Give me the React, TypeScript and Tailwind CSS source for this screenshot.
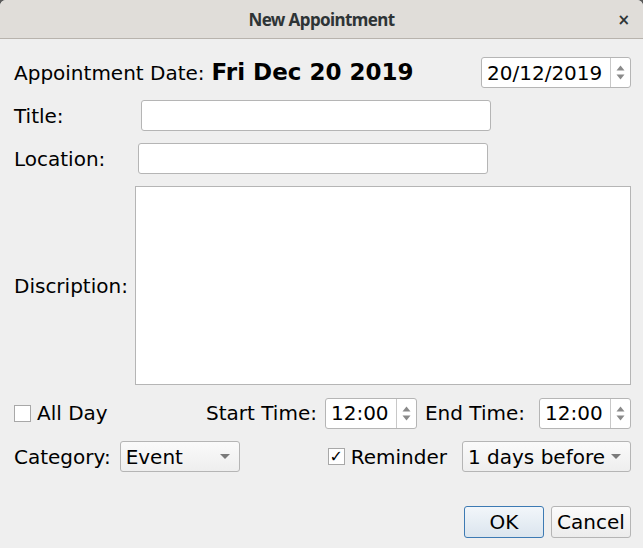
import React from 'react'

function SpinArrows() {
  return (
    <div className="flex h-full w-[20px] flex-col items-center justify-center gap-[3px] border-l border-[#c8c8c8]">
      <svg width="9" height="6" viewBox="0 0 9 6"><path d="M0.5 5.5 L4.5 0.5 L8.5 5.5 Z" fill="#8a8a8a" /></svg>
      <svg width="9" height="6" viewBox="0 0 9 6"><path d="M0.5 0.5 L4.5 5.5 L8.5 0.5 Z" fill="#8a8a8a" /></svg>
    </div>
  )
}

function Spinner({ value, width }: { value: string; width: string }) {
  return (
    <div className={`flex h-[31px] ${width} items-center rounded-[3px] border border-[#b5b5b5] bg-white`}>
      <span className="flex-1 pl-[5px]">{value}</span>
      <SpinArrows />
    </div>
  )
}

function Combo({ value, width }: { value: string; width: string }) {
  return (
    <div className={`flex h-[31px] ${width} items-center justify-between rounded-[3px] border border-[#b5b5b5] bg-gradient-to-b from-[#fafafa] to-[#eeeeee] pl-[5px] pr-[9px]`}>
      <span>{value}</span>
      <svg width="10" height="6" viewBox="0 0 10 6"><path d="M0 0 L10 0 L5 5 Z" fill="#7a7a7a" /></svg>
    </div>
  )
}

function Check({ checked }: { checked?: boolean }) {
  return (
    <div className="flex h-[17px] w-[17px] items-center justify-center border border-[#a8a8a8] bg-white text-[16px] font-bold leading-none">
      {checked ? '✓' : ''}
    </div>
  )
}

export default function App() {
  return (
    <div className="h-[548px] w-[643px] overflow-hidden bg-[#5a5a5a] font-['DejaVu_Sans',sans-serif] text-[20px] text-black">
      <div className="flex h-full flex-col rounded-t-[6px] bg-[#efefef]">
        <div className="relative flex h-[39px] shrink-0 items-center justify-center rounded-t-[6px] border-b border-[#b8b3ad] bg-[#e0ddd9]">
          <span className="pt-[2px] font-['Noto_Sans',sans-serif] text-[17px] font-bold tracking-[-0.6px] text-[#2e3436]">New Appointment</span>
          <span className="absolute right-[13px] top-[9px] text-[15px] font-bold text-[#2e3436]">×</span>
        </div>

        <div className="flex flex-col pl-[14px] pr-[12px] pt-[18px]">
          <div className="flex h-[31px] items-center">
            <span>Appointment Date:</span>
            <span className="ml-[7px] text-[23px] font-bold">Fri Dec 20 2019</span>
            <div className="ml-auto">
              <Spinner value="20/12/2019" width="w-[150px]" />
            </div>
          </div>

          <div className="mt-[12px] flex h-[31px] items-center">
            <span className="w-[127px]">Title:</span>
            <div className="h-[31px] w-[350px] rounded-[3px] border border-[#b5b5b5] bg-white" />
          </div>

          <div className="mt-[12px] flex h-[31px] items-center">
            <span className="w-[124px]">Location:</span>
            <div className="h-[31px] w-[350px] rounded-[3px] border border-[#b5b5b5] bg-white" />
          </div>

          <div className="mt-[12px] flex h-[199px] items-center">
            <span className="w-[121px]">Discription:</span>
            <div className="h-full flex-1 border border-[#b5b5b5] bg-white" />
          </div>

          <div className="mt-[13px] flex h-[30px] items-center">
            <Check />
            <span className="ml-[6px]">All Day</span>
            <span className="ml-auto mr-[8px]">Start Time:</span>
            <Spinner value="12:00" width="w-[92px]" />
            <span className="ml-[8px] mr-[14px]">End Time:</span>
            <Spinner value="12:00" width="w-[92px]" />
          </div>

          <div className="mt-[13px] flex h-[31px] items-center">
            <span className="mr-[9px]">Category:</span>
            <Combo value="Event" width="w-[120px]" />
            <div className="ml-auto">
              <Check checked />
            </div>
            <span className="ml-[6px] mr-[15px]">Reminder</span>
            <Combo value="1 days before" width="w-[169px]" />
          </div>

          <div className="mt-[34px] flex justify-end gap-[7px]">
            <button className="h-[32px] w-[80px] rounded-[3px] border border-[#3d7ab3] bg-gradient-to-b from-[#f2f6fa] to-[#dbe5ee]">OK</button>
            <button className="h-[32px] w-[80px] rounded-[3px] border border-[#b5b5b5] bg-gradient-to-b from-[#fbfbfb] to-[#ececec]">Cancel</button>
          </div>
        </div>
      </div>
    </div>
  )
}
